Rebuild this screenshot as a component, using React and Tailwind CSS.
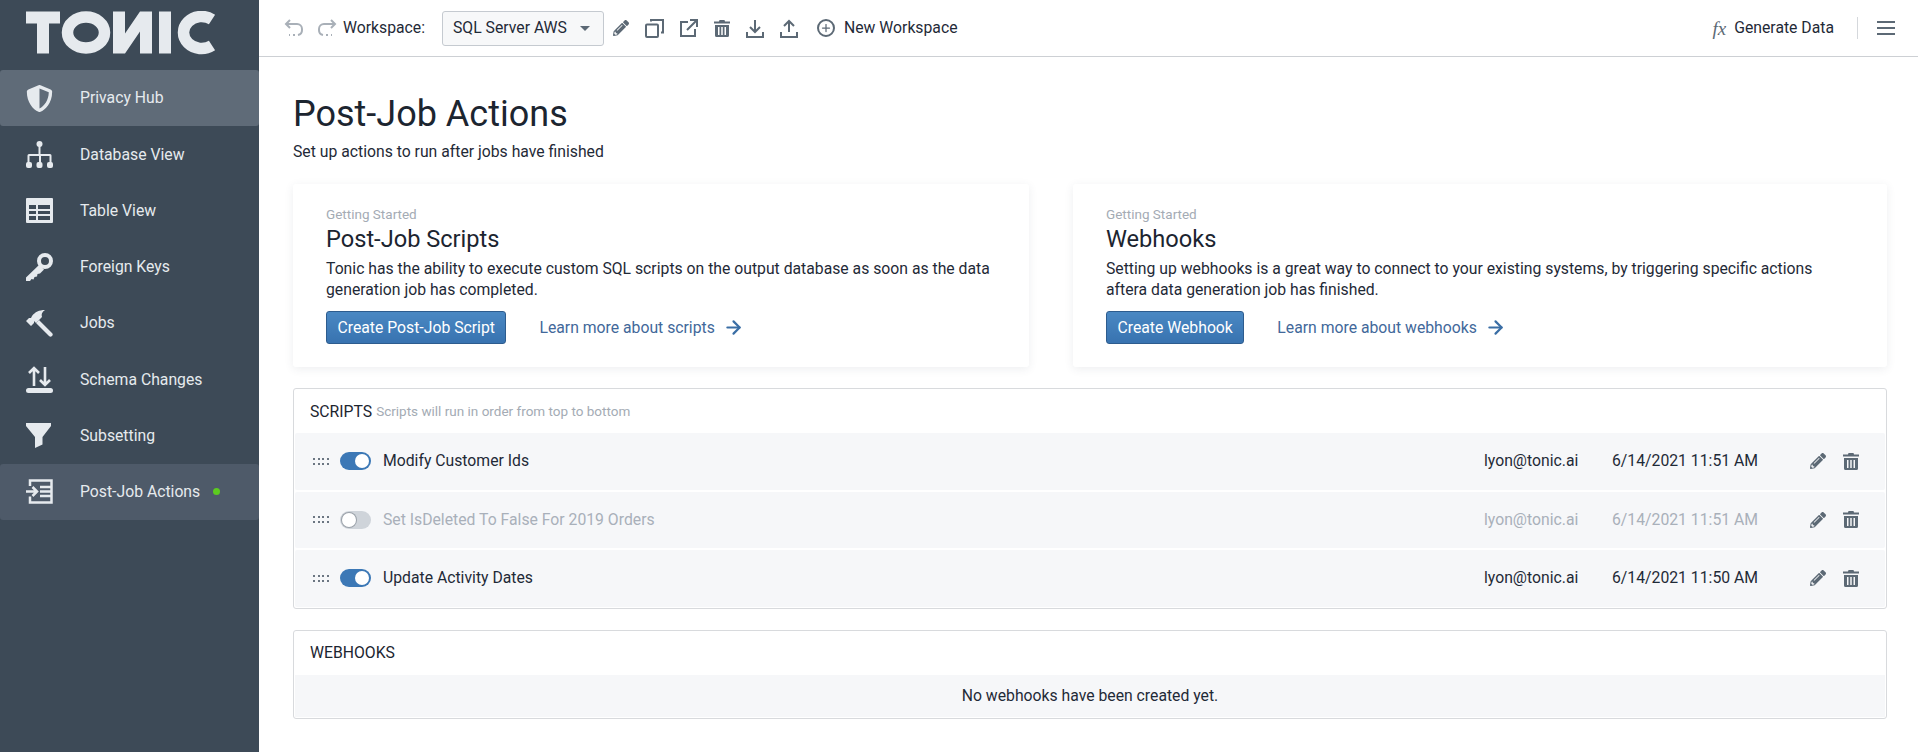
import { FaShieldAlt, FaPencilAlt } from 'react-icons/fa';
import { Plus, ArrowRight } from 'lucide-react';

const Logo = () => (
  <svg width="192" height="44" viewBox="26 10.500 192 44" className="block" fill="#e6eaee">
    <path d="M26 11h34v12H49v30H37V23H26z" />
    <ellipse cx="86" cy="32" rx="18.500" ry="15.500" fill="none" stroke="#e6eaee" strokeWidth="11.500" />
    <path d="M113 53V11h12v22L140 11h12v42h-12V31L125 53z" />
    <path d="M159 11h12v42h-12z" />
    <path d="M212 19A18 16 0 1 0 212 45" fill="none" stroke="#e6eaee" strokeWidth="11.500" />
  </svg>
);

const SitemapIcon = () => (
  <svg width="27" height="27" viewBox="0 0 27 27" fill="#e6eaee">
    <circle cx="13.500" cy="3" r="3" />
    <path d="M12.500 5h2v8h9.500a1.500 1.500 0 0 1 1.500 1.500V22h-2v-7h-8.500v7h-2v-7H3.500v7h-2v-7.500A1.500 1.500 0 0 1 3 13h9.500z" />
    <rect x="0" y="21" width="6" height="6" rx="2" />
    <rect x="10.500" y="21" width="6" height="6" rx="2" />
    <rect x="21" y="21" width="6" height="6" rx="2" />
  </svg>
);

const TableIcon = () => (
  <svg width="27" height="25" viewBox="0 0 27 25" fill="#e6eaee">
    <path d="M0 1a1 1 0 0 1 1-1h25a1 1 0 0 1 1 1v23a1 1 0 0 1-1 1H1a1 1 0 0 1-1-1zM3 7v4h7V7zm9 0v4h12V7zM3 13v3h7v-3zm9 0v3h12v-3zM3 18v4h7v-4zm9 0v4h12v-4z" fillRule="evenodd" />
  </svg>
);

const KeyIcon = () => (
  <svg width="27" height="28" viewBox="0 0 27 28" fill="none">
    <circle cx="19" cy="8" r="6" stroke="#e6eaee" strokeWidth="4" />
    <path d="M13 12L0 24.500V28h4l1.500-2 2 .5 1-2.500 2.500-.5 .5-2.500 2.500-.5 4-4z" fill="#e6eaee" />
  </svg>
);

const HammerIcon = () => (
  <svg width="27" height="27" viewBox="0 0 27 27" fill="#e6eaee">
    <path d="M19 0C13 0 9 2 6 6L5 8 3 8 0 11 5 16 8 13 8 11 10 13 16 7C15 4 16 2 19 0z" />
    <path d="M13 10L26 23a2 2 0 0 1-3 3L10 13z" />
  </svg>
);

const SchemaIcon = () => (
  <svg width="27" height="27" viewBox="0 0 27 27" fill="none" stroke="#e6eaee" strokeWidth="2.600">
    <path d="M8 20V2M3 7l5-5 5 5M19 1v18M14 14l5 5 5-5" />
    <rect x="0" y="22" width="27" height="5" rx="2.500" fill="#e6eaee" stroke="none" />
  </svg>
);

const FunnelIcon = () => (
  <svg width="25" height="25" viewBox="0 0 25 25" fill="#e6eaee">
    <path d="M0 0h25v3L16.500 14v7.500L9 25V14L0 3z" />
  </svg>
);

const PostJobIcon = () => (
  <svg width="27" height="25" viewBox="0 0 27 25" fill="none" stroke="#e6eaee" strokeWidth="2.500">
    <path d="M4 7V1.500h21.500v22H4v-6M14 8h12M14 12.500h12M14 17h12" />
    <path d="M0 12.500h10M6.500 8l4.500 4.500L6.500 17" />
  </svg>
);

const navItems = [
  { label: 'Privacy Hub', icon: <FaShieldAlt size={27} color="#e6eaee" />, bg: 'bg-[#5f6b78]' },
  { label: 'Database View', icon: <SitemapIcon /> },
  { label: 'Table View', icon: <TableIcon /> },
  { label: 'Foreign Keys', icon: <KeyIcon /> },
  { label: 'Jobs', icon: <HammerIcon /> },
  { label: 'Schema Changes', icon: <SchemaIcon /> },
  { label: 'Subsetting', icon: <FunnelIcon /> },
  { label: 'Post-Job Actions', icon: <PostJobIcon />, bg: 'bg-[#4e5a69]', dot: true },
];

const UndoIcon = ({ flip }) => (
  <svg width="20" height="18" viewBox="0 0 20 18" fill="none" stroke="#a9b0b8" strokeWidth="2" className={flip ? '-scale-x-100' : ''}>
    <path d="M6 1L2 5l4 4M2 5h11a5 5 0 0 1 5 5v1a5 5 0 0 1-4 5M5 16h1M9 16h2" />
  </svg>
);

const CopyIcon = () => (
  <svg width="19" height="19" viewBox="0 0 19 19" fill="none" stroke="#5c6975" strokeWidth="2">
    <rect x="1" y="5.500" width="12" height="12.500" rx="1" />
    <path d="M6 2.500V1h12v12.500h-2" />
  </svg>
);

const ExternalIcon = () => (
  <svg width="18" height="18" viewBox="0 0 18 18" fill="none" stroke="#5c6975" strokeWidth="2">
    <path d="M8 3H1v14h14v-7M7 11L17 1M10 1h7v7" />
  </svg>
);

const TrashIcon = ({ size = 16 }) => (
  <svg width={size} height={size + 1} viewBox="0 0 16 17" fill="#5c6975">
    <path d="M5.500 0h5l.5 1.500h5v2H0v-2h5zM1 5h14v10.500a1.500 1.500 0 0 1-1.500 1.500h-11A1.500 1.500 0 0 1 1 15.500zm3 2v8h1.500V7zm3.250 0v8h1.500V7zm3.250 0v8H12V7z" fillRule="evenodd" />
  </svg>
);

const DownloadIcon = ({ up }) => (
  <svg width="18" height="19" viewBox="0 0 18 19" fill="none" stroke="#5c6975" strokeWidth="2">
    {up ? <path d="M9 13V2M4 7l5-5 5 5" /> : <path d="M9 1v12M4 8l5 5 5-5" />}
    <path d="M1 13v5h16v-5" />
  </svg>
);

const PencilIcon = () => <FaPencilAlt size={16} color="#5c6975" />;

const Toolbar = () => (
  <header className="h-[57px] shrink-0 border-b border-[#cdd0d4] flex items-center pl-[25px] pr-[23px] text-[15.750px] text-[#1f2a37]">
    <UndoIcon />
    <div className="ml-[13px]"><UndoIcon flip /></div>
    <span className="ml-[6px]">Workspace:</span>
    <div className="ml-[17px] w-[162px] h-[35px] border border-[#c5cad0] rounded-[3px] bg-[#f7f8f9] flex items-center justify-between pl-[10px] pr-[13px]">
      <span>SQL Server AWS</span>
      <span className="w-0 h-0 border-x-[5px] border-x-transparent border-t-[5px] border-t-[#5c6975]" />
    </div>
    <div className="ml-[9px] flex items-center gap-[16px]">
      <PencilIcon />
      <CopyIcon />
      <ExternalIcon />
      <TrashIcon />
      <DownloadIcon />
      <DownloadIcon up />
    </div>
    <div className="ml-[19px] w-[18px] h-[18px] rounded-full border-2 border-[#5c6975] flex items-center justify-center">
      <Plus size={12} strokeWidth={2.500} color="#5c6975" />
    </div>
    <span className="ml-[9px]">New Workspace</span>
    <i className="ml-auto text-[19px] leading-none text-[#5c6975] font-['Liberation_Serif',serif]">fx</i>
    <span className="ml-[8px]">Generate Data</span>
    <div className="ml-[23px] w-px h-[22px] bg-[#d5d8dc]" />
    <div className="ml-[19px] w-[18px] flex flex-col gap-[4px]">
      <div className="h-[2px] bg-[#5c6975]" />
      <div className="h-[2px] bg-[#5c6975]" />
      <div className="h-[2px] bg-[#5c6975]" />
    </div>
  </header>
);

const Card = ({ className, title, children, button, link }) => (
  <section className={`h-[183px] rounded-[3px] bg-white shadow-[0_2px_10px_rgba(60,70,85,0.09)] pl-[33px] pt-[22px] ${className}`}>
    <div className="text-[13.500px] leading-[16px] text-[#a4abb4]">Getting Started</div>
    <h2 className="mt-[3px] text-[23.625px] leading-[28px] text-[#1c2530]">{title}</h2>
    <p className="mt-[5px] text-[15.750px] leading-[21px] text-[#1f2a37]">{children}</p>
    <div className="mt-[11px] flex items-center">
      <button className="h-[33px] px-[10.500px] rounded-[3px] border border-[#2d5c8e] bg-gradient-to-b from-[#4a88c3] to-[#3873b0] text-white text-[15.750px]">{button}</button>
      <a className="ml-[33px] flex items-center gap-[8px] text-[15.750px] text-[#42689a]">
        {link}
        <ArrowRight size={21} strokeWidth={2.500} color="#3a6ea5" />
      </a>
    </div>
  </section>
);

const Toggle = ({ on }) => (
  <div className={`w-[31px] h-[18px] rounded-full flex items-center p-[2px] ${on ? 'bg-[#3c78b6] justify-end' : 'bg-[#cfd4da] justify-start'}`}>
    <div className={`w-[14px] h-[14px] rounded-full bg-white ${on ? '' : 'ring-1 ring-[#9aa1a9]'}`} />
  </div>
);

const DragDots = () => (
  <div className="grid grid-cols-4 gap-x-[2.600px] gap-y-[3px] w-[16px]">
    {Array.from({ length: 8 }).map((_, i) => (
      <span key={i} className="w-[2px] h-[2px] bg-[#6b7682]" />
    ))}
  </div>
);

const scripts = [
  { name: 'Modify Customer Ids', date: '6/14/2021 11:51 AM', on: true },
  { name: 'Set IsDeleted To False For 2019 Orders', date: '6/14/2021 11:51 AM', on: false },
  { name: 'Update Activity Dates', date: '6/14/2021 11:50 AM', on: true },
];

const App = () => (
  <div className="w-[1918px] h-[752px] flex overflow-hidden bg-white font-['Roboto',sans-serif]">
    <aside className="w-[259px] shrink-0 bg-[#3d4a57]">
      <div className="h-[70px] pl-[26px] pt-[11px]"><Logo /></div>
      {navItems.map((item) => (
        <div key={item.label} className={`h-[56.280px] rounded-[3px] flex items-center text-[15.750px] text-[#e6eaee] ${item.bg || ''}`}>
          <div className="w-[80px] pl-[26px] shrink-0">{item.icon}</div>
          <span>{item.label}</span>
          {item.dot && <span className="ml-[13px] w-[7px] h-[7px] rounded-full bg-[#5ccb1f]" />}
        </div>
      ))}
    </aside>
    <div className="flex-1 min-w-0 flex flex-col">
      <Toolbar />
      <main className="flex-1 pl-[34px] pr-[31px] pt-[36px]">
        <h1 className="text-[36px] leading-[42px] text-[#1c2530]">Post-Job Actions</h1>
        <p className="mt-[6px] text-[15.750px] leading-[21px] text-[#1f2a37]">Set up actions to run after jobs have finished</p>
        <div className="mt-[22px] flex gap-[44px]">
          <Card
            className="w-[736px]"
            title="Post-Job Scripts"
            button="Create Post-Job Script"
            link="Learn more about scripts"
          >
            Tonic has the ability to execute custom SQL scripts on the output database as soon as the data<br />generation job has completed.
          </Card>
          <Card
            className="flex-1"
            title="Webhooks"
            button="Create Webhook"
            link="Learn more about webhooks"
          >
            Setting up webhooks is a great way to connect to your existing systems, by triggering specific actions<br />aftera data generation job has finished.
          </Card>
        </div>
        <section className="mt-[21px] border border-[#d8dadd] rounded-[3px] p-px">
          <div className="h-[43px] pl-[15px] flex items-center gap-[4px]">
            <span className="text-[15.750px] text-[#1c2530]">SCRIPTS</span>
            <span className="text-[13.500px] text-[#a4abb4]">Scripts will run in order from top to bottom</span>
          </div>
          <div className="flex flex-col gap-[2px]">
            {scripts.map((s) => (
              <div key={s.name} className={`h-[56.500px] bg-[#f6f7f9] rounded-[2px] flex items-center pl-[18px] text-[15.750px] ${s.on ? 'text-[#1f2a37]' : 'text-[#a9b0ba]'}`}>
                <DragDots />
                <div className="ml-[11px]"><Toggle on={s.on} /></div>
                <span className="ml-[12px] flex-1">{s.name}</span>
                <span className="w-[128px]">lyon@tonic.ai</span>
                <span className="w-[198px]">{s.date}</span>
                <div className="w-[75px] flex items-center gap-[17px]">
                  <PencilIcon />
                  <TrashIcon />
                </div>
              </div>
            ))}
          </div>
        </section>
        <section className="mt-[21px] border border-[#d8dadd] rounded-[3px] p-px">
          <div className="h-[43px] pl-[15px] flex items-center text-[15.750px] text-[#1c2530]">WEBHOOKS</div>
          <div className="h-[42px] bg-[#f6f7f9] flex items-center justify-center text-[15.750px] text-[#1f2a37]">No webhooks have been created yet.</div>
        </section>
      </main>
    </div>
  </div>
);

export default App;
